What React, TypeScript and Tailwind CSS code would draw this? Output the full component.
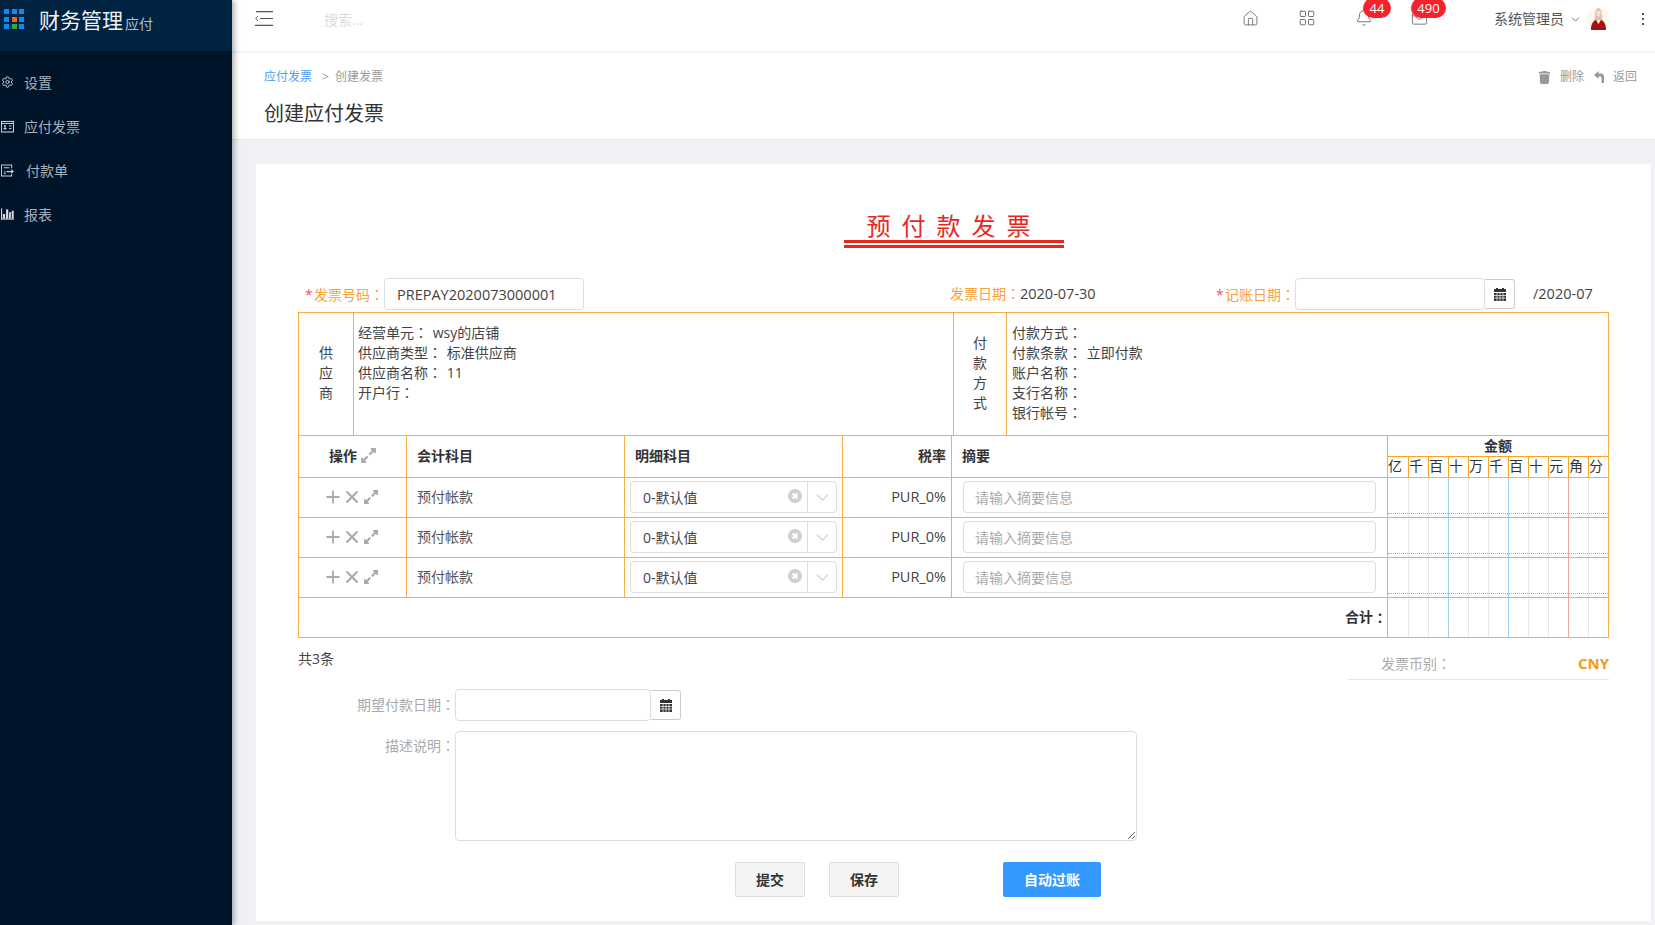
import { Bell, ChevronDown, Home, LayoutGrid, Mail, Plus, Settings, X } from "lucide-react"
import { FaExpandAlt, FaTrash } from "react-icons/fa"

const digits = ["亿", "千", "百", "十", "万", "千", "百", "十", "元", "角", "分"]

const bodyLines = [
  "w-[21px] border-r border-[#e6e6e6]",
  "w-[20px] border-r border-[#e6e6e6]",
  "w-[20px] border-r border-[#9dd0f5]",
  "w-[20px] border-r border-[#e6e6e6]",
  "w-[20px] border-r border-[#e6e6e6]",
  "w-[20px] border-r border-[#9dd0f5]",
  "w-[20px] border-r border-[#e6e6e6]",
  "w-[20px] border-r border-[#e6e6e6]",
  "w-[20px] border-r border-[#eeaaa2]",
  "w-[20px] border-r border-[#e6e6e6]",
  "w-[19px]",
]

// the TC cut centres the full-width colon, which is what the reference shows
function Colon() {
  return <span className="font-['Noto_Sans_CJK_TC',sans-serif] leading-none">：</span>
}

function CalendarIcon() {
  return (
    <svg width="12" height="13" viewBox="0 0 12 13" fill="#333">
      <rect x="2" y="0" width="2" height="2" />
      <rect x="8" y="0" width="2" height="2" />
      <rect x="0" y="1" width="12" height="3" />
      <rect x="0" y="5" width="12" height="8" />
      <path d="M0 7.5h12M0 10h12" stroke="#fff" strokeWidth="0.7" />
      <path d="M3 5v8M6 5v8M9 5v8" stroke="#fff" strokeWidth="0.7" />
    </svg>
  )
}

function BillIcon() {
  return (
    <svg width="13" height="13" viewBox="0 0 13 13" fill="none" stroke="#c3ccd3" strokeWidth="1.1">
      <rect x="0.5" y="1.5" width="12" height="10.5" />
      <path d="M0.5 3.5h12M3 6h2M2.500 8.500h3M8 6h2.500M8 8.500h2.500M4 5v5" />
    </svg>
  )
}

function PayIcon() {
  return (
    <svg width="14" height="13" viewBox="0 0 14 13" fill="none" stroke="#c3ccd3" strokeWidth="1.1">
      <path d="M11.5 4V0.5H0.5v12h11V10" />
      <path d="M3 3.5h6M3 8h2M3 10h2" />
      <path d="M6 7h5V5l3 2.5L11 10V8.500H6z" fill="#c3ccd3" stroke="none" />
    </svg>
  )
}

function ChartIcon() {
  return (
    <svg width="14" height="12" viewBox="0 0 14 12" fill="#d3d9de">
      <rect x="0" y="0" width="1.2" height="12" />
      <rect x="0" y="10.800" width="14" height="1.200" />
      <rect x="2" y="6" width="2.400" height="5" />
      <rect x="5.400" y="1" width="2.400" height="10" />
      <rect x="8.600" y="4" width="2" height="7" />
      <rect x="11.500" y="2.500" width="2.200" height="8.500" />
    </svg>
  )
}

function MenuFoldIcon() {
  return (
    <svg width="18" height="15" viewBox="0 0 18 15" fill="none" stroke="#555" strokeWidth="1.2">
      <path d="M1 0.600h17M5 7.500h13M0 14.400h18" />
      <path d="M3 5L0.800 7.500 3 10" strokeWidth="1" />
    </svg>
  )
}

function BackIcon() {
  return (
    <svg width="10" height="12" viewBox="0 0 10 12" fill="#999">
      <path d="M4.500 0L0 4l4.500 4V5.500H6.500C7.500 5.500 7.500 6.500 7.500 7.500V12H10V5.500C10 3.500 8.800 2.500 7 2.500H4.500z" />
    </svg>
  )
}

function Avatar() {
  return (
    <svg width="23" height="23" viewBox="0 0 23 23">
      <circle cx="11.500" cy="11.500" r="11.500" fill="#fdf9ea" />
      <path d="M8 9c0-5 1.500-8 3.500-8S15 4 15 9l1 7H7z" fill="#e6bdb4" />
      <ellipse cx="11.500" cy="6.500" rx="2" ry="3" fill="#f6dcd4" />
      <path d="M4 23c0-6 2-9 5-10l2.500 4 2.500-4c3 1 5 4 5 10z" fill="#a80f0f" />
      <path d="M9.500 13l2 4 2-4z" fill="#f4e6e0" />
    </svg>
  )
}

function ClearIcon() {
  return (
    <svg width="14" height="14" viewBox="0 0 14 14">
      <circle cx="7" cy="7" r="7" fill="#cfcfcf" />
      <path d="M4.500 4.500l5 5M9.500 4.500l-5 5" stroke="#fff" strokeWidth="1.800" />
    </svg>
  )
}

function NavItem({ icon, label, gap }: { icon: React.ReactNode; label: string; gap: string }) {
  return (
    <div className="flex h-[44px] items-center pl-px text-[14px] text-[#a6b1bb]">
      <span className="flex w-[13px] items-center justify-center">{icon}</span>
      <span className={gap}>{label}</span>
    </div>
  )
}

function Sidebar() {
  return (
    <aside className="z-10 flex h-full w-[232px] shrink-0 flex-col bg-[#001429] shadow-[2px_0_6px_rgba(0,0,0,0.35)]">
      <div className="flex h-[51px] shrink-0 items-start bg-[#012342] pt-[9px] pl-[4px]">
        <div className="grid w-[20px] grid-cols-3 gap-[2.500px]">
          <span className="h-[5px] bg-[#0a8cf5]" />
          <span className="h-[5px] bg-[#0a8cf5]" />
          <span className="h-[5px] bg-[#0a8cf5]" />
          <span className="h-[5px] bg-[#0a8cf5]" />
          <span className="h-[5px] bg-[#f0641e]" />
          <span className="h-[5px] bg-[#0a8cf5]" />
          <span className="h-[5px] bg-[#0a8cf5]" />
          <span className="h-[5px] bg-[#2fa84a]" />
          <span className="h-[5px] bg-[#0a8cf5]" />
        </div>
        <span className="-mt-px ml-[15px] text-[21px] leading-[24px] text-[#eef2f5]">财务管理</span>
        <span className="mt-[6px] ml-[2px] text-[14px] leading-[18px] text-[#b4bdc5]">应付</span>
      </div>
      <nav className="pt-[9px]">
        <NavItem icon={<Settings size={14} color="#cdd4da" strokeWidth={1.700} />} label="设置" gap="ml-[10px]" />
        <NavItem icon={<BillIcon />} label="应付发票" gap="ml-[10px]" />
        <NavItem icon={<PayIcon />} label="付款单" gap="ml-[12px]" />
        <NavItem icon={<ChartIcon />} label="报表" gap="ml-[10px]" />
      </nav>
    </aside>
  )
}

function TopBar() {
  return (
    <header className="z-[5] flex h-[51px] shrink-0 items-start bg-white pt-[11px] shadow-[0_1px_3px_rgba(0,0,0,0.1)]">
      <span className="ml-[23px]">
        <MenuFoldIcon />
      </span>
      <span className="ml-[51px] text-[14px] leading-[18px] text-[#dcdcdc]">搜索...</span>
      <div className="ml-auto flex items-start text-[#666]">
        <Home size={17} strokeWidth={1.200} className="-mt-px" />
        <LayoutGrid size={18} strokeWidth={1.200} className="-mt-[2px] ml-[39px]" />
        <div className="relative ml-[41px]">
          <Bell size={18} strokeWidth={1.200} className="-mt-[2px] -ml-[2px]" />
          <span className="absolute -top-[13px] left-[6px] flex h-[20px] w-[28px] items-center justify-center rounded-full bg-[#f5222d] text-[13px] leading-none text-white">
            44
          </span>
        </div>
        <div className="relative ml-[38px]">
          <Mail size={17} strokeWidth={1.200} className="-mt-px" />
          <span className="absolute -top-[13px] left-0 flex h-[20px] w-[35px] items-center justify-center rounded-full bg-[#f5222d] text-[13px] leading-none text-white">
            490
          </span>
        </div>
        <span className="ml-[66px] text-[14px] leading-[16px] text-[#555]">系统管理员</span>
        <ChevronDown size={13} strokeWidth={1.500} className="mt-[2px] ml-[5px] text-[#555]" />
        <span className="-mt-[4px] ml-[5px]">
          <Avatar />
        </span>
        <div className="mt-[2px] mr-[11px] ml-[32px] flex flex-col gap-[3px]">
          <span className="h-[2px] w-[2px] bg-[#555]" />
          <span className="h-[2px] w-[2px] bg-[#555]" />
          <span className="h-[2px] w-[2px] bg-[#555]" />
        </div>
      </div>
    </header>
  )
}

function PageHead() {
  return (
    <div className="h-[89px] shrink-0 border-b border-[#e8e8e8] bg-white pl-[32px]">
      <div className="flex items-center pt-[18px] text-[12px] leading-[16px] text-[#999]">
        <span className="text-[#4f9bf5]">应付发票</span>
        <span className="ml-[10px]">&gt;</span>
        <span className="ml-[6px]">创建发票</span>
        <div className="mr-[18px] ml-auto flex items-center">
          <FaTrash size={13} color="#999" />
          <span className="ml-[9px]">删除</span>
          <span className="ml-[10px]">
            <BackIcon />
          </span>
          <span className="ml-[9px]">返回</span>
        </div>
      </div>
      <div className="mt-[15px] text-[20px] leading-[28px] text-[#333]">创建应付发票</div>
    </div>
  )
}

function DateInput({ width }: { width: string }) {
  return (
    <div className="flex items-center">
      <input readOnly className={`h-[32px] rounded-[4px] border border-[#ddd] bg-white ${width}`} />
      <span className="flex h-[30px] w-[30px] items-center justify-center rounded-r-[3px] border border-l-0 border-[#ccc]">
        <CalendarIcon />
      </span>
    </div>
  )
}

function InfoLine({ label, value }: { label: string; value?: string }) {
  return (
    <div className="leading-[20px]">
      {label}
      <Colon /> <span className="ml-px">{value}</span>
    </div>
  )
}

function SupplierBlock() {
  return (
    <div className="flex h-[123px] border-b border-[#f6b04a] text-[14px] text-[#444]">
      <div className="flex w-[55px] flex-col items-center justify-center border-r border-[#f6b04a] pb-[2px] leading-[20px]">
        <span>供</span>
        <span>应</span>
        <span>商</span>
      </div>
      <div className="w-[600px] border-r border-[#f6b04a] pt-[10px] pl-[4px]">
        <InfoLine label="经营单元" value="wsy的店铺" />
        <InfoLine label="供应商类型" value="标准供应商" />
        <InfoLine label="供应商名称" value="11" />
        <InfoLine label="开户行" />
      </div>
      <div className="flex w-[53px] flex-col items-center justify-center border-r border-[#f6b04a] pb-[2px] leading-[20px]">
        <span>付</span>
        <span>款</span>
        <span>方</span>
        <span>式</span>
      </div>
      <div className="flex-1 pt-[10px] pl-[5px]">
        <InfoLine label="付款方式" />
        <InfoLine label="付款条款" value="立即付款" />
        <InfoLine label="账户名称" />
        <InfoLine label="支行名称" />
        <InfoLine label="银行帐号" />
      </div>
    </div>
  )
}

function DigitBody({ dotted }: { dotted?: boolean }) {
  return (
    <div className="relative flex h-full">
      {bodyLines.map((cls, i) => (
        <div key={i} className={cls} />
      ))}
      {dotted ? <div className="absolute inset-x-0 bottom-[3px] border-t border-dotted border-[#d6a244]" /> : null}
    </div>
  )
}

function HeaderRow() {
  return (
    <div className="flex h-[42px] border-b border-[#f6b04a] text-[14px] font-bold text-[#333]">
      <div className="flex w-[108px] items-center border-r border-[#f6b04a] pb-[2px] pl-[30px]">
        操作
        <FaExpandAlt size={17} color="#aaa" className="ml-[3px]" />
      </div>
      <div className="flex w-[218px] items-center border-r border-[#f6b04a] pb-[2px] pl-[10px]">会计科目</div>
      <div className="flex w-[218px] items-center border-r border-[#f6b04a] pb-[2px] pl-[10px]">明细科目</div>
      <div className="flex w-[109px] items-center justify-end border-r border-[#f6b04a] pr-[5px] pb-[2px]">税率</div>
      <div className="flex w-[436px] items-center border-r border-[#f6b04a] pb-[2px] pl-[10px]">摘要</div>
      <div className="w-[220px]">
        <div className="flex h-[21px] items-center justify-center border-b border-[#ffa31a] leading-none">金额</div>
        <div className="flex h-[20px] font-normal">
          {digits.map((d, i) => (
            <span
              key={i}
              className={
                i === 0
                  ? "w-[21px] border-r border-[#ffa31a] leading-[18px]"
                  : i === 10
                    ? "w-[19px] leading-[18px]"
                    : "w-[20px] border-r border-[#ffa31a] leading-[18px]"
              }
            >
              {d}
            </span>
          ))}
        </div>
      </div>
    </div>
  )
}

function LineRow() {
  return (
    <div className="flex h-[40px] border-b border-[#f6b04a] text-[14px] text-[#555]">
      <div className="flex w-[108px] items-center border-r border-[#f6b04a] pb-px pl-[25px] text-[#a8a8a8]">
        <Plus size={20} strokeWidth={2.200} className="-ml-px" />
        <X size={20} strokeWidth={2.200} className="-ml-[1px]" />
        <FaExpandAlt size={16} className="ml-[1px]" />
      </div>
      <div className="flex w-[218px] items-center border-r border-[#f6b04a] pb-[2px] pl-[10px]">预付帐款</div>
      <div className="flex w-[218px] items-center border-r border-[#f6b04a] pb-px pl-[5px]">
        <div className="flex h-[32px] w-[207px] items-center rounded-[4px] border border-[#ddd]">
          <span className="ml-[12px] flex-1 text-[#444]">0-默认值</span>
          <span className="-mt-[3px] mr-[5px]">
            <ClearIcon />
          </span>
          <span className="flex h-full w-[29px] items-center justify-center border-l border-[#ddd]">
            <ChevronDown size={21} strokeWidth={1.300} color="#ccc" />
          </span>
        </div>
      </div>
      <div className="flex w-[109px] items-center justify-end border-r border-[#f6b04a] pr-[5px] pb-[2px] text-[14.500px] text-[#444]">
        PUR_0%
      </div>
      <div className="flex w-[436px] items-center border-r border-[#f6b04a] pb-px pl-[11px]">
        <input
          readOnly
          placeholder="请输入摘要信息"
          className="h-[32px] w-[413px] rounded-[4px] border border-[#ddd] px-[11px] placeholder:text-[#aaa]"
        />
      </div>
      <div className="w-[220px]">
        <DigitBody dotted />
      </div>
    </div>
  )
}

function TotalRow() {
  return (
    <div className="flex h-[39px] text-[14px] font-bold text-[#333]">
      <div className="flex w-[1089px] items-center justify-end border-r border-[#f6b04a] pb-[2px]">
        合计
        <Colon />
      </div>
      <div className="w-[220px]">
        <DigitBody />
      </div>
    </div>
  )
}

function InvoiceForm() {
  return (
    <section className="h-full bg-white px-[42px] pt-[47px] text-[14px] text-[#444]">
      <div className="mx-auto w-[220px]">
        <div className="pl-px text-center text-[24px] leading-[29px] tracking-[11px] text-[#e8281e]">预付款发票</div>
        <div className="h-[3px] bg-[#e8281e]" />
        <div className="mt-[2px] h-[3px] bg-[#e8281e]" />
      </div>

      <div className="mt-[30px] mb-[2px] flex h-[32px] items-center">
        <div className="flex w-[652px] items-center pl-[7px] text-[#f9a23a]">
          <span className="w-[9px] text-[#f0506e]">*</span>
          <span>
            发票号码
            <Colon />
          </span>
          <input
            readOnly
            value="PREPAY2020073000001"
            className="h-[32px] w-[200px] rounded-[4px] border border-[#ddd] pl-[12px] text-[14.500px] text-[#444]"
          />
        </div>
        <div className="w-[266px] text-[14.500px]">
          <span className="text-[14px] text-[#f9a23a]">
            发票日期
            <Colon />
          </span>
          2020-07-30
        </div>
        <span className="w-[9px] text-[#f0506e]">*</span>
        <span className="w-[70px] text-[#f9a23a]">
          记账日期
          <Colon />
        </span>
        <DateInput width="w-[190px]" />
        <span className="ml-[18px] text-[14.500px]">/2020-07</span>
      </div>

      <div className="border border-[#f6b04a]">
        <SupplierBlock />
        <HeaderRow />
        <LineRow />
        <LineRow />
        <LineRow />
        <TotalRow />
      </div>

      <div className="flex justify-between">
        <div className="mt-[11px] leading-[20px]">共3条</div>
        <div className="mt-[12px] flex h-[30px] w-[261px] items-center justify-between border-b border-[#e5e5e5] pb-[2px] pl-[33px]">
          <span className="text-[#aaa]">
            发票币别
            <Colon />
          </span>
          <span className="text-[15px] font-bold text-[#f9980f]">CNY</span>
        </div>
      </div>

      <div className="mt-[9px] flex items-center">
        <span className="w-[157px] pb-[2px] text-right text-[#aaa]">
          期望付款日期
          <Colon />
        </span>
        <DateInput width="w-[196px]" />
      </div>
      <div className="mt-[10px] flex items-start">
        <span className="w-[157px] pt-[4px] text-right text-[#aaa]">
          描述说明
          <Colon />
        </span>
        <textarea readOnly className="h-[110px] w-[682px] rounded-[4px] border border-[#ddd]" />
      </div>

      <div className="mt-[21px] ml-[437px] flex font-bold">
        <button className="h-[35px] w-[70px] rounded-[2px] border border-[#ddd] bg-[#f4f4f4] pb-px text-[#333]">
          提交
        </button>
        <button className="ml-[24px] h-[35px] w-[70px] rounded-[2px] border border-[#ddd] bg-[#f4f4f4] pb-px text-[#333]">
          保存
        </button>
        <button className="ml-[104px] h-[35px] w-[98px] rounded-[2px] bg-[#3399ff] pb-px text-white">自动过账</button>
      </div>
    </section>
  )
}

export default function App() {
  return (
    <div className="flex h-screen w-full overflow-hidden bg-[#f0f1f5] font-['Open_Sans','Noto_Sans_CJK_SC',sans-serif]">
      <Sidebar />
      <main className="flex min-w-0 flex-1 flex-col">
        <TopBar />
        <PageHead />
        <div className="min-h-0 flex-1 pt-[24px] pr-[4px] pb-[4px] pl-[24px]">
          <InvoiceForm />
        </div>
      </main>
    </div>
  )
}
